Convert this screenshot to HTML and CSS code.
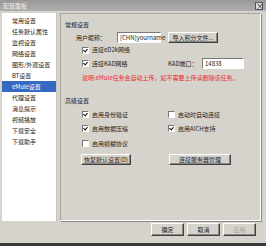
FILE: index.html
```html
<!DOCTYPE html>
<html lang="zh-CN">
<head>
    <meta charset="UTF-8">
    <title>配置面板</title>
    <link rel="stylesheet" href="styles.css">
</head>
<body>
    <div class="window">
        <div class="titlebar">
            <span class="title">配置面板</span>
            <span class="close">×</span>
        </div>

        <div class="main">
            <ul class="nav">
                <li>常用设置</li>
                <li>任务默认属性</li>
                <li>监视设置</li>
                <li>网络设置</li>
                <li>图形/外观设置</li>
                <li>BT设置</li>
                <li class="active">eMule设置</li>
                <li>代理设置</li>
                <li>消息提示</li>
                <li>视频播放</li>
                <li>下载安全</li>
                <li>下载助手</li>
            </ul>

            <div class="panel">
                <div class="group-title">常规设置</div>

                <div class="row nick-row">
                    <span class="label">用户昵称：</span>
                    <span class="field nick">[CHN]yourname</span>
                    <span class="btn import">导入积分文件...</span>
                </div>

                <div class="row ed2k-row">
                    <label class="check"><span class="box on"></span>连接eD2k网络</label>
                </div>

                <div class="row kad-row">
                    <label class="check col"><span class="box on"></span>连接KAD网络</label>
                    <span class="label kad-label">KAD端口：</span>
                    <span class="field port">14838</span>
                </div>

                <div class="row note">说明:eMule任务会自动上传，如不需要上传请删除该任务。</div>

                <div class="group-title adv">高级设置</div>

                <div class="options">
                    <label class="check"><span class="box on"></span>启用身份验证</label>
                    <label class="check"><span class="box"></span>启动时自动连接</label>
                    <label class="check"><span class="box on"></span>启用数据压缩</label>
                    <label class="check"><span class="box on"></span>启用AICH支持</label>
                    <label class="check"><span class="box"></span>启用模糊协议</label>
                </div>

                <div class="row actions">
                    <span class="btn reset">恢复默认设置(D)</span>
                    <span class="btn servers">连接服务器管理</span>
                </div>
            </div>
        </div>

        <div class="footer">
            <span class="btn foot">确定</span>
            <span class="btn foot">取消</span>
            <span class="btn foot disabled">应用</span>
        </div>
    </div>
</body>
</html>
```

FILE: styles.css
```css
* {
    box-sizing: border-box;
}

body {
    margin: 0;
    font-family: "Noto Sans CJK SC", "Liberation Sans", sans-serif;
    font-size: 6px;
    color: #222;
    background: #d4d0c8;
}

.window {
    width: 266px;
    height: 246px;
    display: flex;
    flex-direction: column;
    background: #d6d3cc;
    border-bottom: 3px solid #3a3a3a;
}

/* Title bar */
.titlebar {
    height: 11px;
    display: flex;
    align-items: center;
    justify-content: space-between;
    padding: 0 3px;
    background: linear-gradient(#999, #aeaeae);
    color: #eee;
    line-height: 11px;
}

.close {
    width: 8px;
    height: 8px;
    border: 1px solid #555;
    background: #ddd;
    color: #222;
    font-size: 8px;
    line-height: 6px;
    text-align: center;
}

/* Main area */
.main {
    height: 208px;
    margin-top: 2px;
    display: flex;
    padding-left: 2px;
}

.nav {
    width: 55px;
    margin: 0;
    padding: 2px 0 0;
    list-style: none;
    background: #fff;
    border-right: 1px solid #c8c4bc;
}

.nav li {
    height: 11px;
    line-height: 11px;
    padding-left: 10px;
    white-space: nowrap;
}

.nav li.active {
    background: #3569c4;
    color: #fff;
}

.panel {
    width: 201px;
    margin-left: 3px;
    border: 1px solid #a8a49c;
    border-right-color: #fff;
    border-bottom-color: #fff;
    box-shadow: 1px 1px 0 #8c8983;
    padding-left: 4px;
}

.group-title {
    height: 10px;
    line-height: 10px;
    margin-top: 6px;
}

.group-title.adv {
    margin-top: 13px;
}

.row {
    display: flex;
    align-items: center;
    line-height: 10px;
    white-space: nowrap;
}

.nick-row {
    height: 11px;
    margin-top: 2px;
    padding-left: 11px;
}

.nick-row .label {
    width: 41px;
}

.field {
    height: 11px;
    line-height: 9px;
    padding-left: 2px;
    background: #fff;
    border: 1px solid #fff;
    border-top-color: #7a7a7a;
    border-left-color: #7a7a7a;
    color: #222;
}

.nick {
    width: 44px;
}

.port {
    width: 42px;
}

.btn {
    display: inline-flex;
    align-items: center;
    justify-content: center;
    height: 11px;
    background: #d6d3cc;
    border: 1px solid #404040;
    border-top-color: #fff;
    border-left-color: #fff;
    box-shadow: inset -1px -1px 0 #8c8983;
    white-space: nowrap;
}

.import {
    width: 50px;
    margin-left: 7px;
}

.ed2k-row {
    height: 10px;
    margin-top: 2px;
    padding-left: 17px;
}

.kad-row {
    height: 11px;
    margin-top: 3px;
    padding-left: 17px;
}

.check {
    display: flex;
    align-items: center;
    height: 10px;
    white-space: nowrap;
}

.check.col {
    width: 86px;
}

.kad-label {
    width: 34px;
}

.box {
    width: 7px;
    height: 7px;
    margin-right: 3px;
    background: #fff;
    border: 1px solid #fff;
    border-top-color: #777;
    border-left-color: #777;
    position: relative;
}

.box.on::after {
    content: "";
    position: absolute;
    left: 1px;
    top: 0;
    width: 2px;
    height: 3px;
    border: solid #111;
    border-width: 0 1px 1px 0;
    transform: rotate(40deg);
}

.note {
    height: 10px;
    margin-top: 4px;
    padding-left: 17px;
    color: #f0282c;
}

.options {
    display: grid;
    grid-template-columns: 86px 80px;
    row-gap: 4.5px;
    margin-top: 3px;
    padding-left: 17px;
}

.actions {
    margin-top: 6px;
    padding-left: 16px;
    height: 11px;
}

.reset {
    width: 50px;
}

.servers {
    width: 62px;
    margin-left: 38px;
}

/* Footer buttons */
.footer {
    flex: 1;
    display: flex;
    justify-content: flex-end;
    gap: 3px;
    padding: 2px 10px 0 0;
}

.foot {
    width: 33px;
    height: 13px;
}

.foot.disabled {
    color: #a6a39c;
}
```
